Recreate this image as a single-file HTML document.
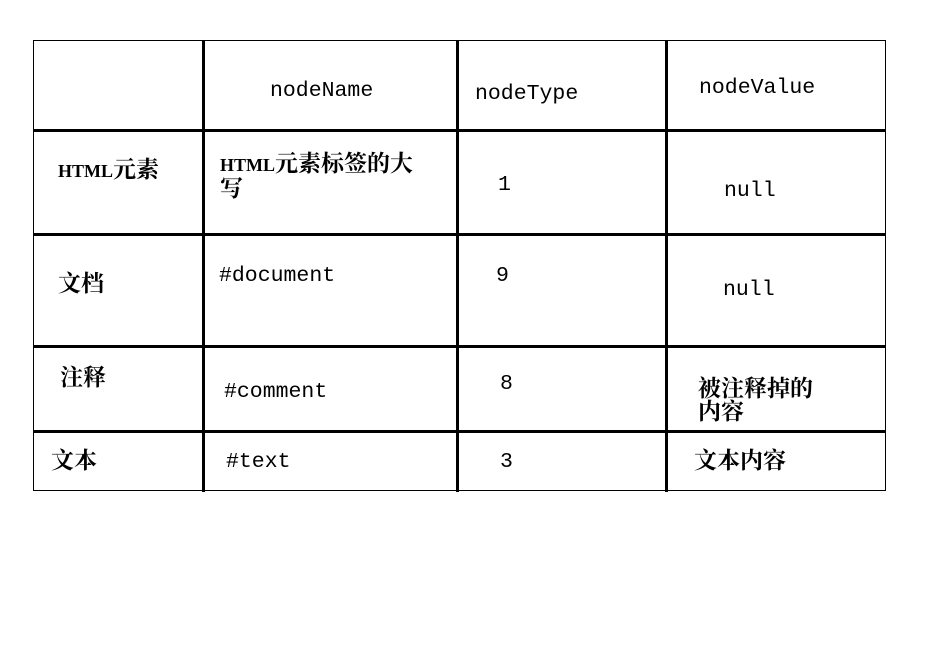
<!DOCTYPE html>
<html><head><meta charset="utf-8"><style>
body{margin:0;width:942px;height:655px;background:#fff;position:relative;overflow:hidden;font-family:"Liberation Mono","Noto Serif CJK SC",monospace;font-size:21.5px;color:#000}
.l{position:absolute;background:#000}
.t{position:absolute;white-space:nowrap;line-height:22px}
.c{font-family:"Liberation Serif","Noto Serif CJK SC",serif;font-weight:bold;font-size:23px}
.c b{font-size:18px}
</style></head><body>
<div class="l" style="left:33px;top:40px;width:853px;height:1px"></div>
<div class="l" style="left:33px;top:490px;width:853px;height:1px"></div>
<div class="l" style="left:33px;top:40px;width:1px;height:451px"></div>
<div class="l" style="left:885px;top:40px;width:1px;height:451px"></div>
<div class="l" style="left:202px;top:40px;width:3px;height:452px"></div>
<div class="l" style="left:456px;top:40px;width:3px;height:452px"></div>
<div class="l" style="left:665px;top:40px;width:3px;height:452px"></div>
<div class="l" style="left:33px;top:129px;width:853px;height:3px"></div>
<div class="l" style="left:33px;top:233px;width:853px;height:3px"></div>
<div class="l" style="left:33px;top:345px;width:853px;height:3px"></div>
<div class="l" style="left:33px;top:430px;width:853px;height:3px"></div>

<div class="t" style="left:270px;top:80px">nodeName</div>
<div class="t" style="left:475px;top:83px">nodeType</div>
<div class="t" style="left:699px;top:77px">nodeValue</div>

<div class="t c" style="left:58px;top:159px"><b>HTML</b>元素</div>
<div class="t c" style="left:220px;top:152px;line-height:23px"><b>HTML</b>元素标签的大<br>写</div>
<div class="t" style="left:498px;top:174px">1</div>
<div class="t" style="left:724px;top:180px">null</div>

<div class="t c" style="left:58px;top:273px">文档</div>
<div class="t" style="left:219px;top:265px">#document</div>
<div class="t" style="left:496px;top:265px">9</div>
<div class="t" style="left:723px;top:279px">null</div>

<div class="t c" style="left:60px;top:367px">注释</div>
<div class="t" style="left:224px;top:381px">#comment</div>
<div class="t" style="left:500px;top:373px">8</div>
<div class="t c" style="left:698px;top:377px;line-height:23px">被注释掉的<br>内容</div>

<div class="t c" style="left:51px;top:450px">文本</div>
<div class="t" style="left:226px;top:451px">#text</div>
<div class="t" style="left:500px;top:451px">3</div>
<div class="t c" style="left:694px;top:450px">文本内容</div>
</body></html>
